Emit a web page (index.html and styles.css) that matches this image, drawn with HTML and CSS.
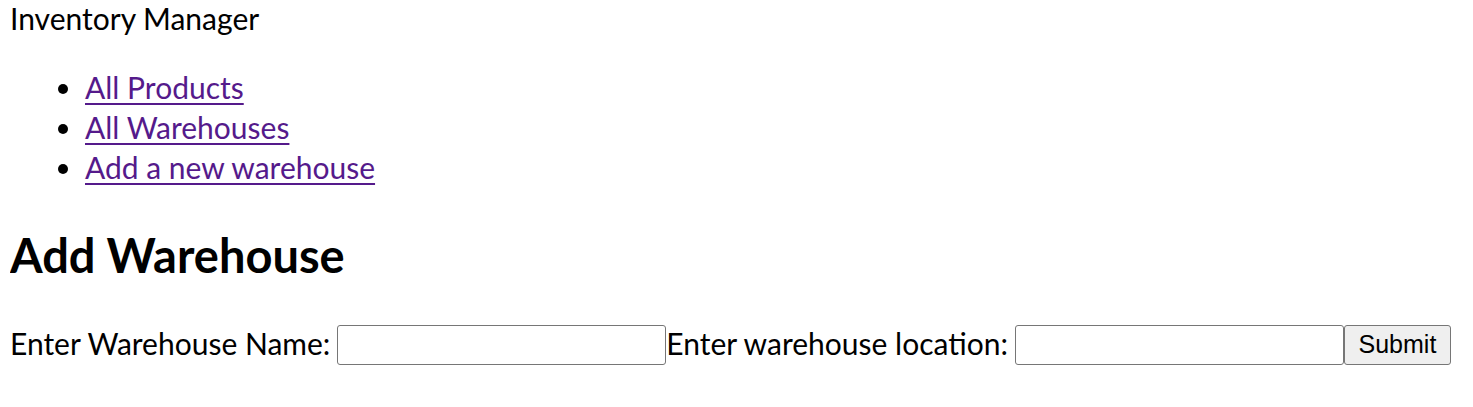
FILE: index.html
```html
<!DOCTYPE html>
<html>
<head>
<meta charset="utf-8">
<title>Inventory Manager</title>
<link rel="stylesheet" href="styles.css">
</head>
<body>
<div class="brand">Inventory Manager</div>
<ul class="nav">
  <li><a class="nav-link" href="#">All Products</a></li>
  <li><a class="nav-link" href="#">All Warehouses</a></li>
  <li><a class="nav-link" href="#">Add a new warehouse</a></li>
</ul>
<h2 class="title">Add Warehouse</h2>
<form class="form">
  <label class="label" for="wname">Enter Warehouse Name:</label>
  <input class="field" id="wname" type="text">
  <label class="label" for="wloc">Enter warehouse location:</label>
  <input class="field" id="wloc" type="text">
  <button class="submit" type="button">Submit</button>
</form>
</body>
</html>
```
FILE: styles.css
```css
body {
  margin: 0 0 0 10px;
  font-family: Lato, "Liberation Sans", sans-serif;
  font-size: 30px;
  line-height: 40px;
  color: #000;
  background: #fff;
}
.brand {
  margin-top: -2px;
}
.nav {
  margin: 29px 0 30px;
  padding-left: 75px;
}
.nav-link {
  color: #551a8b;
  text-decoration: underline;
  text-decoration-thickness: 2px;
  text-underline-offset: 4px;
}
.title {
  margin: 38px 0 38px;
  font-size: 47px;
  line-height: 60px;
  font-weight: bold;
}
.form {
  display: flex;
  align-items: center;
}
.label {
  margin-right: 7px;
  padding-bottom: 3px;
}
.field {
  box-sizing: border-box;
  width: 329px;
  height: 40px;
  margin: 0;
  border: 1px solid #767676;
  border-radius: 3px;
  background: #fff;
  font-size: 25px;
}
.submit {
  box-sizing: border-box;
  width: 107px;
  height: 40px;
  margin: 0;
  padding: 0;
  border: 1px solid #767676;
  border-radius: 3px;
  background: #efefef;
  color: #000;
  font-family: "Liberation Sans", Arial, sans-serif;
  font-size: 25px;
}
```
